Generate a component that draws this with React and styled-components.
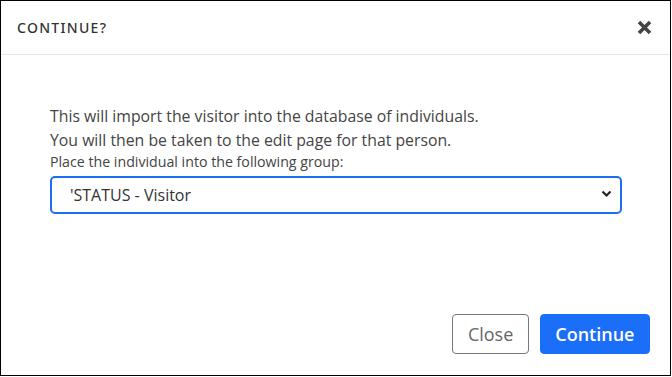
import React from "react";
import styled, { createGlobalStyle } from "styled-components";

const Global = createGlobalStyle`
  html, body { margin: 0; padding: 0; background: #fff; }
  body { font-family: "Open Sans", "Noto Sans", sans-serif; }
  * { box-sizing: border-box; }
`;

const Modal = styled.div`
  width: 671px;
  height: 376px;
  border: 1px solid #000;
  background: #fff;
  display: flex;
  flex-direction: column;
`;

const Header = styled.div`
  height: 54px;
  border-bottom: 1px solid #e5e5e5;
  display: flex;
  align-items: center;
  justify-content: space-between;
  padding: 0 18px 0 16px;
`;

const Title = styled.h5`
  margin: 0;
  font-family: "Noto Sans", "Open Sans", sans-serif;
  font-size: 14px;
  font-weight: 500;
  letter-spacing: 1.3px;
  color: #333;
  text-transform: uppercase;
`;

const CloseX = styled.button`
  border: none;
  background: none;
  padding: 0;
  width: 16px;
  height: 16px;
  display: flex;
  align-items: center;
  justify-content: center;
  cursor: pointer;
`;

const Body = styled.div`
  flex: 1;
  padding: 49px 49px 0 49px;
  display: flex;
  flex-direction: column;
`;

const Text = styled.p`
  margin: 0;
  font-size: 15.8px;
  line-height: 24px;
  color: #444;
`;

const Label = styled.label`
  font-size: 14.2px;
  line-height: 20px;
  color: #444;
`;

const SelectWrap = styled.div`
  position: relative;
  margin-top: 4px;
  width: 572px;
`;

const Select = styled.select`
  appearance: none;
  width: 100%;
  height: 38px;
  border: 2px solid #1c6ef2;
  border-radius: 5px;
  background: #fff;
  font-family: "Open Sans", "Noto Sans", sans-serif;
  font-size: 16px;
  color: #333;
  padding: 0 30px 0 18px;
  outline: none;
`;

const Chevron = styled.svg`
  position: absolute;
  right: 10px;
  top: 14px;
  pointer-events: none;
`;

const Footer = styled.div`
  display: flex;
  justify-content: flex-end;
  gap: 11px;
  padding: 0 20px 21px 0;
`;

const Button = styled.button`
  height: 40px;
  border-radius: 4px;
  font-family: "Open Sans", "Noto Sans", sans-serif;
  font-size: 18px;
  font-weight: ${(p) => (p.$primary ? 600 : 400)};
  padding: 0 14.5px;
  border: 1px solid ${(p) => (p.$primary ? "#1a6ef8" : "#777")};
  background: ${(p) => (p.$primary ? "#1a6ef8" : "#fff")};
  color: ${(p) => (p.$primary ? "#fff" : "#666")};
  cursor: pointer;
`;

export default function App() {
  return (
    <>
      <Global />
      <Modal>
        <Header>
          <Title>Continue?</Title>
          <CloseX aria-label="Close">
            <svg width="15" height="15" viewBox="0 0 15 15">
              <path d="M2 2 L13 13 M13 2 L2 13" stroke="#444" strokeWidth="3.6" strokeLinecap="butt" />
            </svg>
          </CloseX>
        </Header>
        <Body>
          <Text>This will import the visitor into the database of individuals.</Text>
          <Text>You will then be taken to the edit page for that person.</Text>
          <Label>Place the individual into the following group:</Label>
          <SelectWrap>
            <Select defaultValue="visitor">
              <option value="visitor">'STATUS - Visitor</option>
            </Select>
            <Chevron width="11" height="8" viewBox="0 0 11 8">
              <path d="M1.5 1.5 L5.5 5.5 L9.5 1.5" fill="none" stroke="#222" strokeWidth="2.2" />
            </Chevron>
          </SelectWrap>
        </Body>
        <Footer>
          <Button>Close</Button>
          <Button $primary>Continue</Button>
        </Footer>
      </Modal>
    </>
  );
}
